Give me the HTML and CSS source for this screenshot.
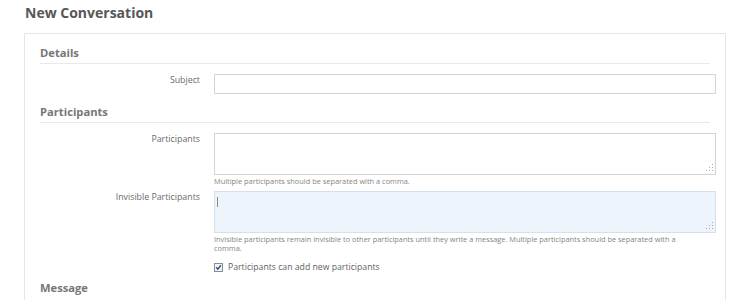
FILE: index.html
```html
<!DOCTYPE html>
<html lang="en">
<head>
<meta charset="utf-8">
<title>New Conversation</title>
<link rel="stylesheet" href="styles.css">
</head>
<body>
<div class="page">
  <h1 class="title">New Conversation</h1>
  <form class="box">
    <h2 class="section">Details</h2>
    <div class="row">
      <label class="lbl" for="subject">Subject</label>
      <div class="ctrl"><input id="subject" class="text" type="text"></div>
    </div>

    <h2 class="section">Participants</h2>
    <div class="row">
      <label class="lbl" for="parts">Participants</label>
      <div class="ctrl">
        <div class="area-wrap">
          <textarea id="parts" class="area"></textarea>
          <svg class="grip" width="7" height="7" viewBox="0 0 7 7"><rect x="6" y="0" width="1" height="1"/><rect x="3" y="3" width="1" height="1"/><rect x="6" y="3" width="1" height="1"/><rect x="0" y="6" width="1" height="1"/><rect x="3" y="6" width="1" height="1"/><rect x="6" y="6" width="1" height="1"/></svg>
        </div>
        <p class="hint">Multiple participants should be separated with a comma.</p>
      </div>
    </div>
    <div class="row row-tight">
      <label class="lbl" for="invis">Invisible Participants</label>
      <div class="ctrl">
        <div class="area-wrap">
          <textarea id="invis" class="area area-focus"></textarea>
          <span class="caret"></span>
          <svg class="grip" width="7" height="7" viewBox="0 0 7 7"><rect x="6" y="0" width="1" height="1"/><rect x="3" y="3" width="1" height="1"/><rect x="6" y="3" width="1" height="1"/><rect x="0" y="6" width="1" height="1"/><rect x="3" y="6" width="1" height="1"/><rect x="6" y="6" width="1" height="1"/></svg>
        </div>
        <p class="hint hint-wide">Invisible participants remain invisible to other participants until they write a message. Multiple participants should be separated with a comma.</p>
        <label class="check">
          <svg class="cbox" width="9" height="9" viewBox="0 0 9 9">
            <rect x="0.5" y="0.5" width="8" height="8" fill="#f4f4f4" stroke="#8c8c8c"/>
            <path d="M2.2 4.3 L3.8 6.2 L6.9 2.2" fill="none" stroke="#2a4f9e" stroke-width="1.4"/>
          </svg>
          <span>Participants can add new participants</span>
        </label>
      </div>
    </div>

    <h2 class="section section-msg">Message</h2>
    <div class="spacer"></div>
  </form>
</div>
</body>
</html>
```

FILE: styles.css
```css
html, body {
  margin: 0;
  padding: 0;
  background: #ffffff;
}

.page {
  padding: 0 14px 0 24px;
  font-family: "Open Sans", "DejaVu Sans", sans-serif;
}

.title {
  margin: 4px 0 0 1px;
  font-size: 14px;
  line-height: 18px;
  font-weight: 700;
  color: #575757;
}

.box {
  margin-top: 11px;
  border: 1px solid #e6e6e6;
  padding: 1px 9px 0 15px;
  min-height: 266px;
}

.section {
  margin: 11px 6px 0 0;
  padding-bottom: 3px;
  border-bottom: 1px solid #e9e9e9;
  font-size: 11.2px;
  line-height: 14px;
  font-weight: 700;
  color: #767676;
}

.section-msg {
  margin-top: 8px;
  border-bottom: none;
}

.row {
  display: flex;
  gap: 14px;
  margin-top: 10px;
}

.row-tight {
  margin-top: 5px;
}

.lbl {
  width: 160px;
  flex: none;
  text-align: right;
  font-size: 8.8px;
  line-height: 12px;
  color: #6a6a6a;
}

.ctrl {
  flex: 1;
  min-width: 0;
}

.text {
  display: block;
  box-sizing: border-box;
  width: 100%;
  height: 20px;
  margin: 0;
  border: 1px solid #d4d4d4;
  background: #ffffff;
  outline: none;
}

.area-wrap {
  position: relative;
}

.area {
  display: block;
  box-sizing: border-box;
  width: 100%;
  height: 42px;
  margin: 0;
  border: 1px solid #d4d4d4;
  background: #ffffff;
  resize: none;
  outline: none;
}

.area-focus {
  background: #edf4fc;
  border-color: #d3e1ee;
}

.grip {
  position: absolute;
  right: 3px;
  bottom: 4px;
  fill: #a8a8a8;
}

.caret {
  position: absolute;
  left: 3px;
  top: 6px;
  width: 1px;
  height: 10px;
  background: #8a8a8a;
}

.hint {
  margin: 2px 0 0;
  font-size: 7.4px;
  line-height: 9px;
  color: #858585;
}

.hint-wide {
  padding-right: 20px;
}

.check {
  display: flex;
  align-items: center;
  gap: 5px;
  margin-top: 8px;
  font-size: 8.7px;
  line-height: 12px;
  color: #626262;
}

.cbox {
  display: block;
  flex: none;
}

.spacer {
  height: 4px;
}
```
